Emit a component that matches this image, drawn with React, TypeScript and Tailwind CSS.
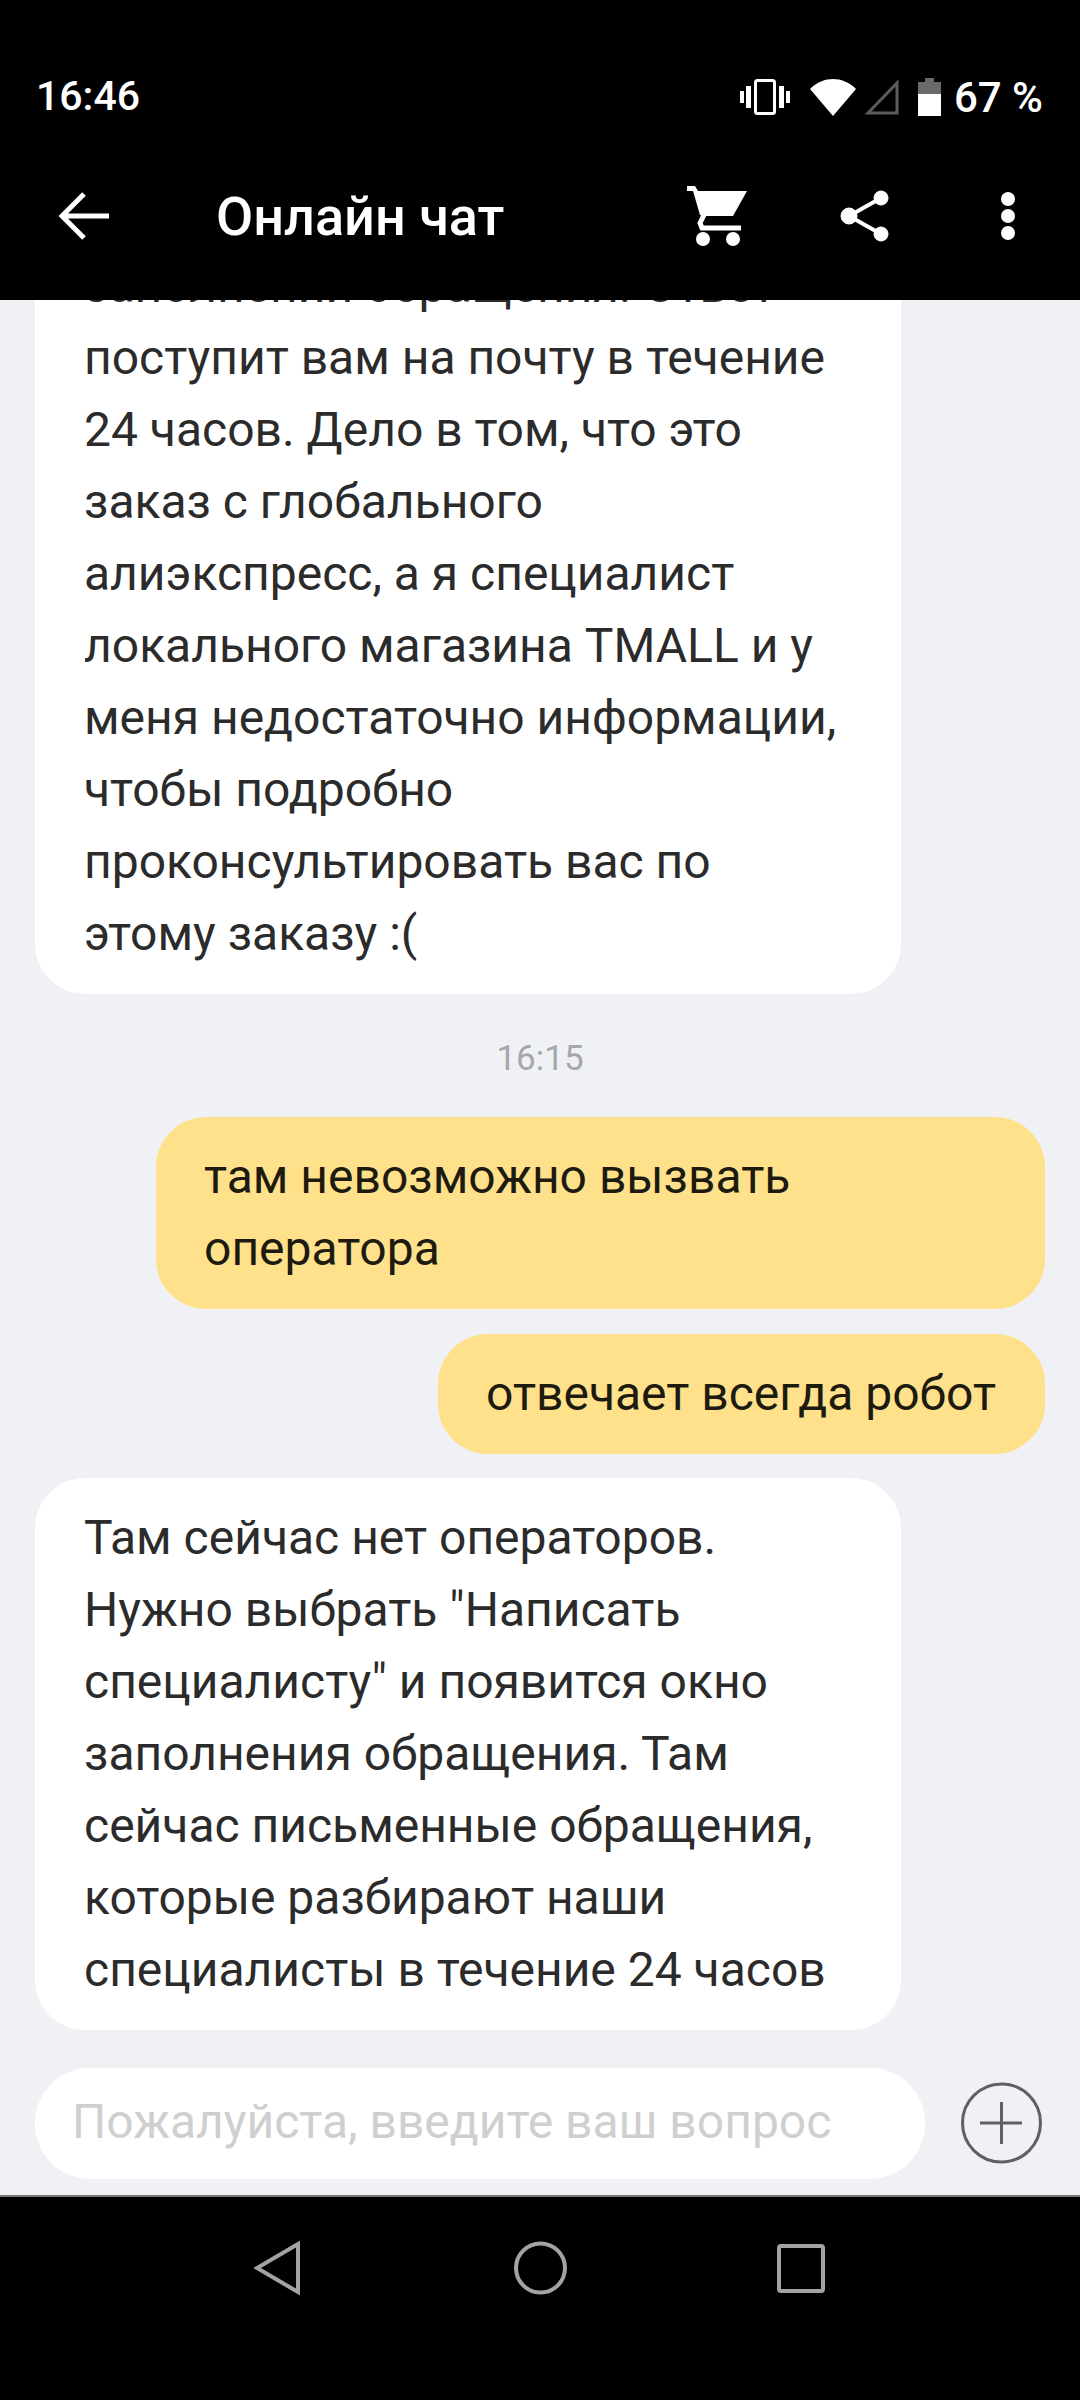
import React from 'react';

const font = "font-['Roboto','Noto_Sans',sans-serif]";

function Bubble({ lines, mine }: { lines: string[]; mine?: boolean }) {
  return (
    <div
      className={`shrink-0 rounded-[50px] py-[24px] text-[48px] leading-[72px] whitespace-nowrap ${
        mine ? 'self-end bg-[#fee18a] pl-[48px] pr-[49px] text-[#1d1a10]' : 'w-[866px] self-start bg-white pl-[49px] text-[#2b2b2b]'
      }`}
    >
      {lines.map((l) => (
        <div key={l}>{l}</div>
      ))}
    </div>
  );
}

function StatusIcons() {
  return (
    <div className="flex items-center">
      <svg width="50" height="36" viewBox="0 0 50 36" fill="none" stroke="#fff">
        <rect x="15.5" y="1.5" width="19" height="33" rx="2" strokeWidth="3" />
        <path d="M8.5 7v22M41.5 7v22" strokeWidth="5" />
        <path d="M2 12v12M48 12v12" strokeWidth="4" />
      </svg>
      <svg className="ml-[20px]" width="46" height="38" viewBox="0 0 46 38">
        <path d="M0 11C7 4 15 1 23 1s16 3 23 10L23 38Z" fill="#fff" />
      </svg>
      <svg className="ml-[9px]" width="34" height="36" viewBox="0 0 34 36" fill="none">
        <path d="M32 4v30H3Z" stroke="#5c5c5c" strokeWidth="3" />
      </svg>
      <svg className="ml-[19px]" width="23" height="38" viewBox="0 0 23 38">
        <path d="M7 0h9v4h7v13H0V4h7Z" fill="#6a6a6a" />
        <rect y="16" width="23" height="22" fill="#fff" />
      </svg>
    </div>
  );
}

function TopBar() {
  return (
    <div className={`relative z-10 flex h-[300px] shrink-0 flex-col bg-black text-white ${font}`}>
      <div className="flex h-[192px] items-center justify-between pl-[36px] pr-[37px] pt-[2px]">
        <span className="text-[41px] font-medium">16:46</span>
        <div className="flex items-center gap-[13px]">
          <StatusIcons />
          <span className="text-[42px] font-medium">67 %</span>
        </div>
      </div>
      <div className="flex h-[48px] items-center pl-[59px]">
        <svg className="shrink-0" width="50" height="48" viewBox="0 0 50 48" fill="none" stroke="#fff" strokeWidth="5">
          <path d="M50 24H4M25 2 3 24l22 22" />
        </svg>
        <span className="ml-[107px] flex-1 text-[54px] font-medium whitespace-nowrap">Онлайн чат</span>
        <svg className="shrink-0" width="62" height="62" viewBox="0 0 62 62" fill="#fff">
          <path d="M1 1h8l3 5h49L47 31H20l-1 0-5-1L7 6H1Z" />
          <path d="M18 30l-4 8 2 5h39" fill="none" stroke="#fff" strokeWidth="5" />
          <circle cx="17" cy="54" r="7" />
          <circle cx="47" cy="54" r="7" />
        </svg>
        <svg className="ml-[92px] shrink-0" width="50" height="52" viewBox="0 0 50 52" fill="#fff" stroke="#fff">
          <circle cx="41" cy="8" r="7" />
          <circle cx="9" cy="26" r="8" />
          <circle cx="41" cy="44" r="7" />
          <path d="M41 8 9 26l32 18" fill="none" strokeWidth="4" />
        </svg>
        <div className="ml-[111px] mr-[65px] flex shrink-0 flex-col gap-[3px]">
          <span className="h-[14px] w-[14px] rounded-full bg-white" />
          <span className="h-[14px] w-[14px] rounded-full bg-white" />
          <span className="h-[14px] w-[14px] rounded-full bg-white" />
        </div>
      </div>
    </div>
  );
}

export default function App() {
  return (
    <div className={`flex h-[2400px] w-[1080px] flex-col overflow-hidden bg-[#f0f1f5] ${font}`}>
      <TopBar />

      <div className="flex min-h-0 flex-1 flex-col justify-end overflow-hidden px-[35px]">
        <Bubble
          lines={[
            'заполнении обращения. Ответ',
            'поступит вам на почту в течение',
            '24 часов. Дело в том, что это',
            'заказ с глобального',
            'алиэкспресс, а я специалист',
            'локального магазина TMALL и у',
            'меня недостаточно информации,',
            'чтобы подробно',
            'проконсультировать вас по',
            'этому заказу :(',
          ]}
        />
        <div className="mt-[43px] mb-[37px] shrink-0 text-center text-[35px] leading-[43px] text-[#a5a7ab]">16:15</div>
        <div className="w-[889px] shrink-0 self-end">
          <Bubble mine lines={['там невозможно вызвать', 'оператора']} />
        </div>
        <div className="h-[25px] shrink-0" />
        <Bubble mine lines={['отвечает всегда робот']} />
        <div className="h-[24px] shrink-0" />
        <Bubble
          lines={[
            'Там сейчас нет операторов.',
            'Нужно выбрать "Написать',
            'специалисту" и появится окно',
            'заполнения обращения. Там',
            'сейчас письменные обращения,',
            'которые разбирают наши',
            'специалисты в течение 24 часов',
          ]}
        />
      </div>

      <div className="flex h-[165px] shrink-0 items-start pl-[35px] pt-[38px]">
        <div className="flex h-[111px] w-[890px] items-center rounded-[55px] bg-white pb-[3px] pl-[37px] text-[48px] whitespace-nowrap text-[#cfcfd1]">
          Пожалуйста, введите ваш вопрос
        </div>
        <svg className="ml-[35px] mt-[14px]" width="83" height="82" viewBox="0 0 83 82" fill="none" stroke="#5f6063" strokeWidth="3">
          <circle cx="41.5" cy="41" r="39" />
          <path d="M20 41h42M41.5 20v42" />
        </svg>
      </div>

      <div className="flex h-[205px] shrink-0 items-start gap-[214px] border-t-2 border-[#777] bg-black pl-[254px] pt-[44px]">
        <svg className="shrink-0" width="46" height="54" viewBox="0 0 46 54" fill="none" stroke="#a3a3a3" strokeWidth="4">
          <path d="M44 3v48L3 27Z" />
        </svg>
        <svg className="shrink-0" width="53" height="54" viewBox="0 0 53 54" fill="none" stroke="#a3a3a3" strokeWidth="4">
          <circle cx="26.5" cy="27" r="24.5" />
        </svg>
        <svg className="mt-[3px] -ml-[4px] shrink-0" width="48" height="49" viewBox="0 0 48 49" fill="none" stroke="#a3a3a3" strokeWidth="4">
          <rect x="2" y="2" width="44" height="45" rx="2" />
        </svg>
      </div>
    </div>
  );
}
